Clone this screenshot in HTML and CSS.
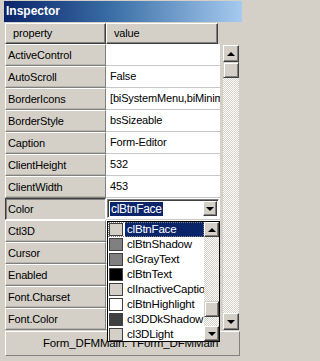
FILE: index.html
```html
<!DOCTYPE html>
<html>
<head>
<meta charset="utf-8">
<link rel="stylesheet" href="styles.css">
</head>
<body>
<div class="win">
  <div class="title">Inspector</div>
  <div class="head">
    <div class="hbtn hprop">property</div>
    <div class="hbtn hval">value</div>
  </div>
  <div class="main">
    <div class="grid">
      <div class="row"><div class="prop">ActiveControl</div><div class="val"></div></div>
      <div class="row"><div class="prop">AutoScroll</div><div class="val">False</div></div>
      <div class="row"><div class="prop">BorderIcons</div><div class="val">[biSystemMenu,biMinim</div></div>
      <div class="row"><div class="prop">BorderStyle</div><div class="val">bsSizeable</div></div>
      <div class="row"><div class="prop">Caption</div><div class="val">Form-Editor</div></div>
      <div class="row"><div class="prop">ClientHeight</div><div class="val">532</div></div>
      <div class="row"><div class="prop">ClientWidth</div><div class="val">453</div></div>
      <div class="row sel"><div class="prop">Color</div><div class="val">
        <div class="combo"><span class="ctext">clBtnFace</span><span class="cbtn"><span class="tri down"></span></span></div>
      </div></div>
      <div class="row"><div class="prop">Ctl3D</div><div class="val"></div></div>
      <div class="row"><div class="prop">Cursor</div><div class="val"></div></div>
      <div class="row"><div class="prop">Enabled</div><div class="val"></div></div>
      <div class="row"><div class="prop">Font.Charset</div><div class="val"></div></div>
      <div class="row"><div class="prop">Font.Color</div><div class="val"></div></div>
    </div>
    <div class="vsb">
      <div class="sbtn"><span class="tri up"></span></div>
      <div class="thumb"></div>
      <div class="track"></div>
      <div class="sbtn"><span class="tri down"></span></div>
    </div>
  </div>
  <div class="status">Form_DFMMain: TForm_DFMMain</div>

  <div class="list">
    <div class="items">
      <div class="item selitem"><span class="sw c-face"></span><span class="itxt">clBtnFace</span></div>
      <div class="item"><span class="sw c-shadow"></span><span class="itxt">clBtnShadow</span></div>
      <div class="item"><span class="sw c-gray"></span><span class="itxt">clGrayText</span></div>
      <div class="item"><span class="sw c-text"></span><span class="itxt">clBtnText</span></div>
      <div class="item"><span class="sw c-inact"></span><span class="itxt">clInactiveCaption</span></div>
      <div class="item"><span class="sw c-hi"></span><span class="itxt">clBtnHighlight</span></div>
      <div class="item"><span class="sw c-dk"></span><span class="itxt">cl3DDkShadow</span></div>
      <div class="item"><span class="sw c-light"></span><span class="itxt">cl3DLight</span></div>
    </div>
    <div class="lsb">
      <div class="sbtn small"><span class="tri up"></span></div>
      <div class="track ltrack1"></div>
      <div class="thumb lthumb"></div>
      <div class="track ltrack2"></div>
      <div class="sbtn small"><span class="tri down"></span></div>
    </div>
  </div>
</div>
</body>
</html>
```
FILE: styles.css
```css
* { box-sizing: border-box; }
html, body { margin: 0; padding: 0; background: #d4d0c8; }
body {
  font-family: "Liberation Sans", Arial, sans-serif;
  font-size: 11px;
  letter-spacing: -0.15px;
  color: #000;
}
.win {
  position: relative;
  width: 245px;
  height: 361px;
  overflow: hidden;
  background: #d4d0c8;
  padding-top: 1px;
}
.title {
  margin: 0 3px 0 4px;
  height: 21px;
  line-height: 21px;
  padding-left: 2px;
  background: linear-gradient(to right, #0a246a 0%, #3a6ea5 45%, #a6caf0 100%);
  color: #fff;
  font-weight: bold;
  font-size: 12px;
  letter-spacing: 0;
}
.head {
  display: flex;
  margin-top: 1px;
  height: 21px;
  padding-left: 5px;
}
.hbtn {
  height: 21px;
  line-height: 19px;
  padding-left: 7px;
  border: 1px solid;
  border-color: #fff #404040 #404040 #fff;
  box-shadow: inset -1px -1px 0 #808080;
  background: #d4d0c8;
}
.hprop { width: 101px; }
.hval { width: 112px; }
.main {
  display: flex;
  height: 286px;
  padding-left: 5px;
}
.grid {
  width: 215px;
  display: flex;
  flex-direction: column;
}
.row {
  display: flex;
  height: 22px;
}
.prop {
  width: 101px;
  height: 22px;
  line-height: 20px;
  padding-left: 2px;
  border: 1px solid;
  border-color: #fff #808080 #808080 #fff;
  box-shadow: inset 0 -1px 0 #b8b4ac;
  background: #d4d0c8;
  white-space: nowrap;
  overflow: hidden;
}
.sel .prop {
  border-color: #404040 #fff #fff #404040;
  box-shadow: inset 1px 1px 0 #808080;
}
.val {
  width: 114px;
  height: 22px;
  line-height: 21px;
  padding-left: 4px;
  background: #fff;
  border-bottom: 1px solid #c8c8c8;
  white-space: nowrap;
  overflow: hidden;
}
.sel .val { padding: 1px 1px 0 1px; }
.combo {
  display: flex;
  align-items: center;
  height: 19px;
  width: 112px;
  border: 1px solid;
  border-color: #808080 #fff #fff #808080;
  box-shadow: inset 1px 1px 0 #404040;
  background: #fff;
  padding: 1px 1px 1px 2px;
}
.ctext {
  background: #0a246a;
  color: #fff;
  line-height: 14px;
  height: 14px;
  padding: 0 1px;
  font-size: 12px;
  letter-spacing: -0.3px;
}
.cbtn {
  margin-left: auto;
  width: 14px;
  height: 15px;
  display: flex;
  align-items: center;
  justify-content: center;
  border: 1px solid;
  border-color: #fff #404040 #404040 #fff;
  box-shadow: inset -1px -1px 0 #808080;
  background: #d4d0c8;
}
.tri { width: 0; height: 0; display: block; }
.tri.up { border-left: 4px solid transparent; border-right: 4px solid transparent; border-bottom: 4px solid #000; }
.tri.down { border-left: 4px solid transparent; border-right: 4px solid transparent; border-top: 4px solid #000; }
.vsb {
  width: 16px;
  margin-left: 3px;
  margin-top: 1px;
  display: flex;
  flex-direction: column;
}
.sbtn {
  height: 17px;
  display: flex;
  align-items: center;
  justify-content: center;
  border: 1px solid;
  border-color: #fff #404040 #404040 #fff;
  box-shadow: inset -1px -1px 0 #808080;
  background: #d4d0c8;
}
.thumb {
  height: 16px;
  border: 1px solid;
  border-color: #d4d0c8 #404040 #404040 #d4d0c8;
  box-shadow: inset 1px 1px 0 #fff, inset -1px -1px 0 #808080;
  background: #d4d0c8;
}
.track {
  flex: 1;
  background: repeating-conic-gradient(#fff 0 25%, #d4d0c8 0 50%) 0 0 / 2px 2px;
}
.status {
  margin: 1px 5px 0 5px;
  height: 25px;
  line-height: 23px;
  padding-left: 37px;
  border: 1px solid;
  border-color: #fff #808080 #808080 #fff;
  background: #d4d0c8;
  font-size: 11.5px;
  white-space: nowrap;
  overflow: hidden;
}
.list {
  position: absolute;
  left: 107px;
  top: 221px;
  width: 113px;
  height: 121px;
  border: 1px solid #000;
  background: #fff;
  display: flex;
}
.items {
  width: 96px;
  overflow: hidden;
}
.item {
  display: flex;
  align-items: center;
  height: 15px;
  white-space: nowrap;
  font-size: 11.5px;
  letter-spacing: -0.2px;
  overflow: hidden;
}
.sw {
  flex: none;
  width: 14px;
  height: 13px;
  margin-left: 1px;
  border: 1px solid #404040;
}
.itxt {
  margin-left: 2px;
  padding-left: 2px;
  line-height: 15px;
  height: 15px;
  flex: 1;
  min-width: 0;
  overflow: hidden;
}
.selitem { outline: 1px dotted #808080; outline-offset: -1px; }
.selitem .itxt { background: #0a246a; color: #fff; }
.c-face { background: #d4d0c8; }
.c-shadow { background: #808080; }
.c-gray { background: #808080; }
.c-text { background: #000; }
.c-inact { background: #d4d0c8; }
.c-hi { background: #fff; }
.c-dk { background: #404040; }
.c-light { background: #d4d0c8; }
.lsb {
  width: 15px;
  display: flex;
  flex-direction: column;
}
.sbtn.small { height: 15px; }
.ltrack1 { flex: none; height: 64px; }
.lthumb { height: 16px; }
.ltrack2 { flex: 1; }
```
